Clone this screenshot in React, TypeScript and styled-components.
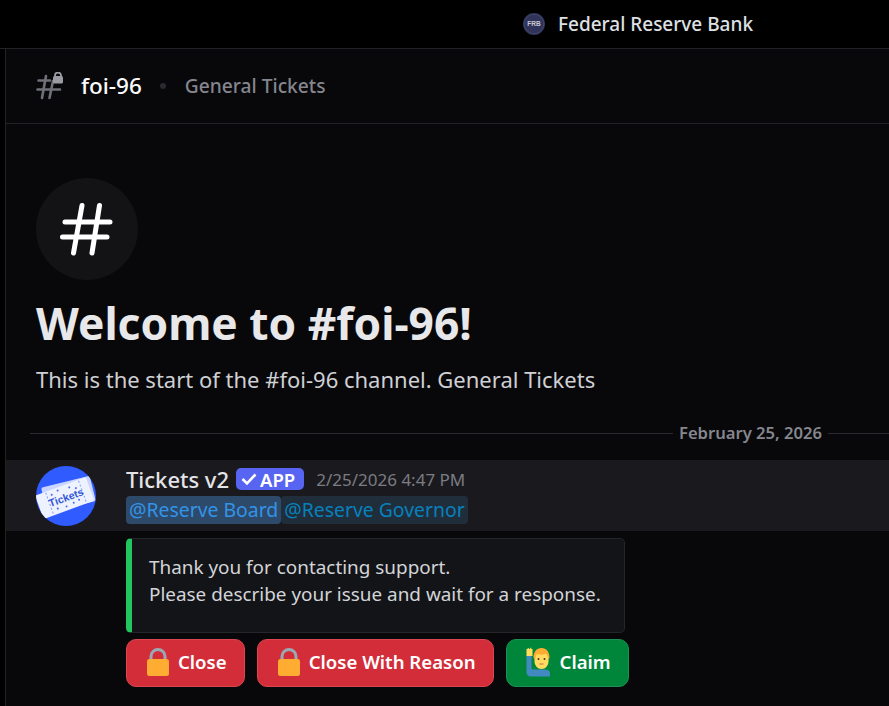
import styled, { createGlobalStyle } from 'styled-components';

const GlobalStyle = createGlobalStyle`
  html, body {
    margin: 0;
    padding: 0;
    background: #08080b;
    overflow: hidden;
  }
  * {
    box-sizing: border-box;
  }
  #root {
    font-family: "Noto Sans", "Open Sans", sans-serif;
  }
`;

const Page = styled.div`
  width: 889px;
  height: 706px;
  display: flex;
  flex-direction: column;
  overflow: hidden;
  background: #08080b;
`;

const ServerBar = styled.div`
  height: 49px;
  flex: none;
  display: flex;
  align-items: center;
  gap: 13px;
  padding-left: 523px;
  background: #000;
  border-bottom: 1px solid #222226;
`;

const ServerName = styled.span`
  color: #dfe0e4;
  font-size: 19px;
  font-weight: 500;
`;

const Body = styled.div`
  flex: 1;
  display: flex;
  min-height: 0;
`;

const Gutter = styled.div`
  width: 6px;
  flex: none;
  background: #000;
  border-right: 1px solid #222226;
`;

const Main = styled.main`
  flex: 1;
  min-width: 0;
`;

const ChannelHeader = styled.header`
  height: 75px;
  display: flex;
  align-items: center;
  padding-left: 30px;
  border-bottom: 1px solid #222226;
`;

const ChannelName = styled.span`
  margin: 0 0 2px 18px;
  color: #fbfbfc;
  font-size: 22.5px;
  font-weight: 500;
`;

const HeaderDot = styled.span`
  width: 6px;
  height: 6px;
  margin: 0 19px 0 18px;
  border-radius: 50%;
  background: #2a2a2f;
`;

const ChannelTopic = styled.span`
  margin-bottom: 2px;
  color: #85868e;
  font-size: 19.2px;
  font-weight: 500;
`;

const Welcome = styled.section`
  padding: 54px 0 0 30px;
`;

const HashCircle = styled.div`
  width: 102px;
  height: 102px;
  display: flex;
  align-items: center;
  justify-content: center;
  border-radius: 50%;
  background: #131316;
`;

const WelcomeTitle = styled.h1`
  margin: 14px 0 0;
  color: #e8e8ea;
  font-size: 44.3px;
  line-height: 58px;
  font-weight: 700;
`;

const WelcomeText = styled.p`
  margin: 12px 0 0;
  color: #cfd0d4;
  font-size: 22px;
  line-height: 30px;
`;

const DateDivider = styled.div`
  margin: 29px 0 0 24px;
  display: flex;
  align-items: center;
  gap: 6px;
  color: #85868e;
  font-size: 16.6px;
  font-weight: 600;
  line-height: 20px;

  &::before,
  &::after {
    content: '';
    height: 1px;
    background: #2a2a2f;
  }
  &::before {
    flex: 1;
  }
  &::after {
    width: 61px;
  }
`;

const MessageBand = styled.div`
  height: 71px;
  margin-top: 17px;
  padding: 6px 0 0 30px;
  display: flex;
  gap: 30px;
  background: #1a1a1e;
`;

const MessageMeta = styled.div`
  display: flex;
  flex-direction: column;
`;

const AuthorRow = styled.div`
  height: 26px;
  display: flex;
  align-items: center;
`;

const AuthorName = styled.span`
  color: #e4e4e7;
  font-size: 22px;
  font-weight: 500;
`;

const AppBadge = styled.span`
  height: 22px;
  margin-left: 7px;
  padding: 0 9px 0 5px;
  display: inline-flex;
  align-items: center;
  gap: 3px;
  border-radius: 5px;
  background: #5865f2;
  color: #fff;
  font-size: 18.5px;
  font-weight: 600;
`;

const Timestamp = styled.span`
  margin-left: 12px;
  color: #7b7c84;
  font-size: 17px;
`;

const Mentions = styled.div`
  display: flex;
  margin-top: 4px;
`;

const Mention = styled.span<{ $strong?: boolean }>`
  height: 28px;
  padding: 0 3px 1px;
  display: inline-flex;
  align-items: center;
  border-radius: 4px;
  font-size: 19.4px;
  color: ${(p) => (p.$strong ? '#3393e6' : '#0880bd')};
  background: ${(p) => (p.$strong ? '#2d4a6b' : '#1f2e3a')};
`;

const Attachments = styled.div`
  padding: 7px 0 0 120px;
`;

const Embed = styled.div`
  width: 499px;
  height: 95px;
  padding: 15px 0 0 17px;
  border: 1px solid #25262a;
  border-left: 6px solid #23c55e;
  border-radius: 5px;
  background: #131417;
  color: #d3d4d8;
  font-size: 18.9px;
  line-height: 27px;
`;

const ButtonRow = styled.div`
  margin-top: 6px;
  display: flex;
  gap: 12px;
`;

const ActionButton = styled.button<{ $variant: 'danger' | 'success' }>`
  height: 48px;
  padding: 0 17px 3px 19px;
  display: flex;
  align-items: center;
  gap: 8px;
  border: 1px solid ${(p) => (p.$variant === 'danger' ? '#dc4650' : '#1c9155')};
  border-radius: 10px;
  background: ${(p) => (p.$variant === 'danger' ? '#d22d39' : '#00863a')};
  color: #fff;
  font-family: inherit;
  font-size: 18.6px;
  font-weight: 600;
`;

const HashLock = () => (
  <svg width="27" height="28" viewBox="0 0 27 28" fill="none">
    <g stroke="#6f7078" strokeWidth="2.6" strokeLinecap="round">
      <path d="M2.5 8.500H14M1.500 17.500H24" />
      <path d="M10 4L6 26M17 9L13.500 26" />
    </g>
    <path d="M19 5V3.500a3 3 0 0 1 6 0V5" stroke="#9a9ba3" strokeWidth="1.800" />
    <rect x="17" y="4" width="10" height="7.500" rx="1.500" fill="#9a9ba3" />
  </svg>
);

const LargeHash = () => (
  <svg width="54" height="54" viewBox="0 0 54 54" fill="none" stroke="#fff" strokeWidth="5" strokeLinecap="round">
    <path d="M5 20H50M2.500 35H47" />
    <path d="M22 3.500L13.500 51M39.500 3.500L32 51" />
  </svg>
);

const ServerIcon = () => (
  <svg width="22" height="22" viewBox="0 0 22 22">
    <circle cx="11" cy="11" r="11" fill="#31345a" />
    <circle cx="11" cy="11" r="9.800" fill="none" stroke="#45486c" strokeWidth="0.800" />
    <text x="11" y="13.200" textAnchor="middle" fontSize="6.500" fontWeight="700" fill="#c9cad4" fontFamily="Liberation Sans">
      FRB
    </text>
  </svg>
);

const ticketDots = [
  [17, 24],
  [24, 22],
  [36, 23],
  [42, 26],
  [18, 39],
  [27, 40],
  [35, 39],
  [41, 38],
];

const TicketAvatar = () => (
  <svg width="60" height="60" viewBox="0 0 60 60">
    <defs>
      <clipPath id="avatar-clip">
        <circle cx="30" cy="30" r="30" />
      </clipPath>
    </defs>
    <g clipPath="url(#avatar-clip)">
      <rect width="60" height="60" fill="#2f5bff" />
      <g transform="rotate(-20 30 30)">
        <rect x="8" y="16" width="50" height="26" rx="2" fill="#c9d5ff" transform="rotate(6 30 28)" />
        <rect x="1" y="19" width="54" height="25" rx="2" fill="#eef2ff" />
        <line x1="12" y1="20" x2="12" y2="43" stroke="#7f99ff" strokeDasharray="2 2" />
        <line x1="47" y1="20" x2="47" y2="43" stroke="#7f99ff" strokeDasharray="2 2" />
        {ticketDots.map(([cx, cy]) => (
          <circle key={`${cx}-${cy}`} cx={cx} cy={cy} r="1" fill="#4a6cf0" />
        ))}
        <text x="29.500" y="35" textAnchor="middle" fontSize="10.500" fontWeight="700" fill="#2f55d8" fontFamily="Liberation Sans">
          Tickets
        </text>
      </g>
    </g>
  </svg>
);

const LockEmoji = () => (
  <svg width="24" height="30" viewBox="0 0 24 30" fill="none">
    <path d="M5 14V9.500a7 7 0 0 1 14 0V14" stroke="#99aab5" strokeWidth="3" />
    <rect x="1" y="12" width="22" height="17" rx="2.500" fill="#ffac33" />
  </svg>
);

const PersonEmoji = () => (
  <svg width="26" height="30" viewBox="0 0 26 30">
    <path d="M0.500 8h5v13c0 1 .5 1.500 1.500 1.500h11c3.500 0 6 1 6 3.500v3.500H5c-3 0-4.500-2-4.500-4.500z" fill="#4289c1" />
    <path d="M0.500 2h1.200V1h1.200v1h1.200V.8h1.200V2h1.200v7H0.500z" fill="#ffdc5d" />
    <path d="M8.500 9c0-4.500 3-7 7-7s7 2.500 7 7v5c0 4.500-3 8-7 8s-7-3.500-7-8z" fill="#ffdc5d" />
    <path d="M7.500 11c0-6 3-10 8-10s8 4 8 10l-1.500 1c0-2-.5-4-2-5-3 1-6.500 1-9 0-1 1-1.500 3-1.500 5z" fill="#ffac33" />
    <circle cx="12.500" cy="12" r="1" fill="#662113" />
    <circle cx="18.500" cy="12" r="1" fill="#662113" />
    <path d="M13.500 17h4" stroke="#c1694f" strokeWidth="1" />
  </svg>
);

const Check = () => (
  <svg width="16" height="14" viewBox="0 0 16 14" fill="none" stroke="#fff" strokeWidth="2.6">
    <path d="M1.500 7l4.500 4.500L14.500 2.500" />
  </svg>
);

export default function App() {
  return (
    <Page>
      <GlobalStyle />
      <ServerBar>
        <ServerIcon />
        <ServerName>Federal Reserve Bank</ServerName>
      </ServerBar>
      <Body>
        <Gutter />
        <Main>
          <ChannelHeader>
            <HashLock />
            <ChannelName>foi-96</ChannelName>
            <HeaderDot />
            <ChannelTopic>General Tickets</ChannelTopic>
          </ChannelHeader>
          <Welcome>
            <HashCircle>
              <LargeHash />
            </HashCircle>
            <WelcomeTitle>Welcome to #foi-96!</WelcomeTitle>
            <WelcomeText>This is the start of the #foi-96 channel. General Tickets</WelcomeText>
          </Welcome>
          <DateDivider>February 25, 2026</DateDivider>
          <MessageBand>
            <TicketAvatar />
            <MessageMeta>
              <AuthorRow>
                <AuthorName>Tickets v2</AuthorName>
                <AppBadge>
                  <Check />
                  APP
                </AppBadge>
                <Timestamp>2/25/2026 4:47 PM</Timestamp>
              </AuthorRow>
              <Mentions>
                <Mention $strong>@Reserve Board</Mention>
                <Mention>@Reserve Governor</Mention>
              </Mentions>
            </MessageMeta>
          </MessageBand>
          <Attachments>
            <Embed>
              Thank you for contacting support.
              <br />
              Please describe your issue and wait for a response.
            </Embed>
            <ButtonRow>
              <ActionButton $variant="danger">
                <LockEmoji />
                Close
              </ActionButton>
              <ActionButton $variant="danger">
                <LockEmoji />
                Close With Reason
              </ActionButton>
              <ActionButton $variant="success">
                <PersonEmoji />
                Claim
              </ActionButton>
            </ButtonRow>
          </Attachments>
        </Main>
      </Body>
    </Page>
  );
}
